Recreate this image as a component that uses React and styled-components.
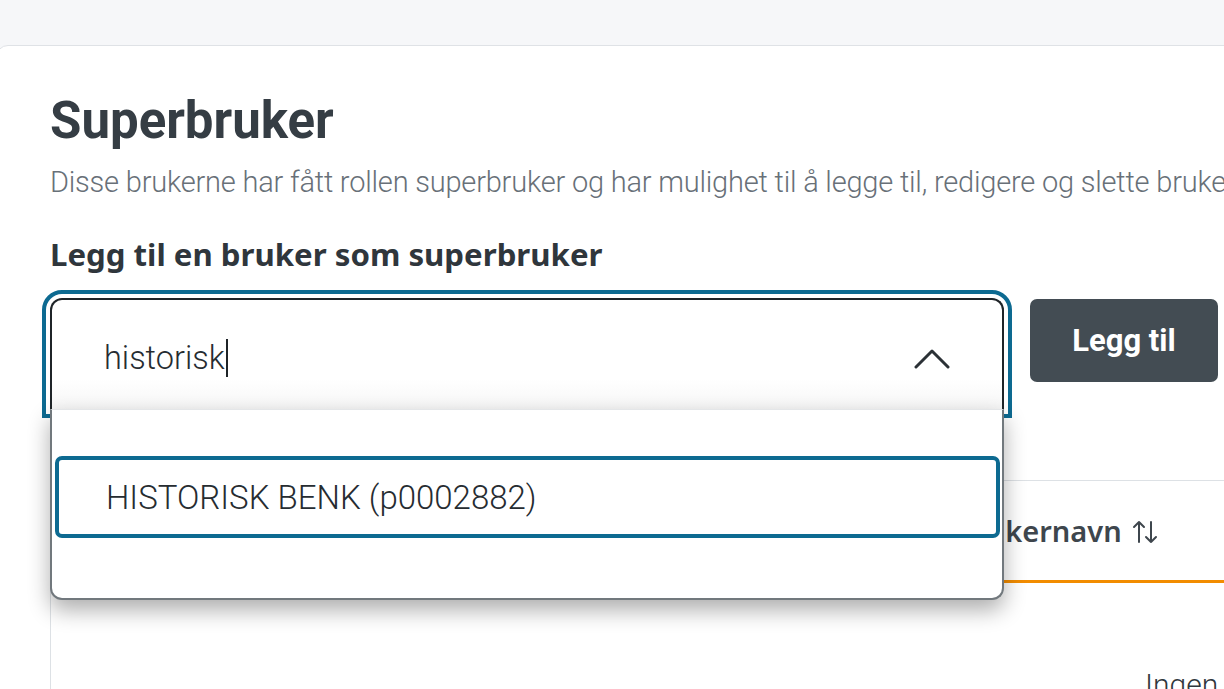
import React from "react";
import styled, { createGlobalStyle } from "styled-components";

const GlobalStyle = createGlobalStyle`
  html, body {
    margin: 0;
    padding: 0;
    background: #f6f7f9;
    font-family: Roboto, "Liberation Sans", sans-serif;
  }
  * { box-sizing: border-box; }
`;

const Page = styled.div`
  height: 689px;
  overflow: hidden;
  padding-top: 45px;
`;

const Card = styled.section`
  margin-left: -4px;
  width: 2600px;
  min-height: 800px;
  background: #fff;
  border: 1px solid #dfe2e6;
  border-radius: 12px;
  padding: 45px 0 0 53px;
`;

const Title = styled.h1`
  margin: 0;
  font-size: 51px;
  line-height: 60px;
  font-weight: 700;
  color: #353d44;
`;

const Lead = styled.p`
  margin: 12px 0 0;
  font-size: 29px;
  line-height: 38px;
  font-weight: 300;
  color: #687078;
  white-space: nowrap;
  letter-spacing: -0.2px;
`;

const Label = styled.label`
  display: block;
  margin-top: 33px;
  font-family: "Noto Sans", Roboto, sans-serif;
  font-size: 31.2px;
  line-height: 40px;
  font-weight: 700;
  color: #2f363c;
`;

const Row = styled.div`
  display: flex;
  align-items: flex-start;
  gap: 26px;
  margin-top: 24px;
`;

const Combo = styled.div`
  position: relative;
  width: 954px;
`;

const Field = styled.div`
  display: flex;
  align-items: center;
  justify-content: space-between;
  height: 112px;
  padding: 0 52px;
  border: 2px solid #1f2428;
  border-bottom: none;
  border-radius: 12px 12px 0 0;
  outline: 4px solid #0d6a91;
  outline-offset: 4px;
  background: linear-gradient(to bottom, #fff 72%, #f6f6f6);
  font-size: 32.5px;
  font-weight: 300;
  color: #262c31;
`;

const Value = styled.span`
  display: flex;
  align-items: center;
  margin-top: 5px;
`;

const Caret = styled.span`
  display: inline-block;
  width: 2px;
  height: 38px;
  margin-left: 1px;
  background: #1f2428;
`;

const Chevron = styled.svg`
  width: 36px;
  height: 22px;
  margin-top: 8px;
`;

const Menu = styled.div`
  position: absolute;
  left: 0;
  right: 0;
  top: 111px;
  height: 191px;
  padding: 46px 2px 0 3px;
  background: #fff;
  border: 2px solid #71787d;
  border-top: 1px solid #e4e6e8;
  border-radius: 0 0 12px 12px;
  box-shadow: 0 10px 22px rgba(0, 0, 0, 0.32);
  z-index: 2;
`;

const Option = styled.div`
  height: 82px;
  display: flex;
  align-items: center;
  padding-left: 47px;
  border: 4px solid ${(p) => (p.active ? "#0d6a91" : "transparent")};
  border-radius: 7px;
  font-size: 33px;
  font-weight: 300;
  color: #262c31;
`;

const Button = styled.button`
  width: 188px;
  height: 83px;
  margin-top: 1px;
  border: none;
  border-radius: 7px;
  background: #434c53;
  color: #fff;
  font-family: Roboto, "Liberation Sans", sans-serif;
  font-size: 31px;
  font-weight: 700;
`;

const Table = styled.div`
  margin-top: 70px;
  border: 1px solid #dde1e5;
  border-right: none;
  min-height: 300px;
`;

const Head = styled.div`
  display: grid;
  grid-template-columns: 880px 300px 1fr;
  height: 102px;
  border-bottom: 3px solid #f28c00;
`;

const HeadCell = styled.div`
  display: flex;
  align-items: center;
  gap: 10px;
  padding-left: 24px;
  font-family: "Noto Sans", Roboto, sans-serif;
  font-size: 29px;
  font-weight: 600;
  color: #3e464d;
`;

const SortIcon = styled.svg`
  width: 26px;
  height: 24px;
  margin-top: 2px;
`;

const Empty = styled.div`
  padding: 84px 0 0 1094px;
  font-size: 30px;
  font-weight: 300;
  color: #30373d;
  white-space: nowrap;
`;

export default function App() {
  return (
    <>
      <GlobalStyle />
      <Page>
        <Card>
          <Title>Superbruker</Title>
          <Lead>
            Disse brukerne har fått rollen superbruker og har mulighet til å legge til, redigere og slette brukere.
          </Lead>
          <Label>Legg til en bruker som superbruker</Label>
          <Row>
            <Combo>
              <Field>
                <Value>
                  historisk
                  <Caret />
                </Value>
                <Chevron viewBox="0 0 36 22" fill="none">
                  <path d="M2 19 L18 3 L34 19" stroke="#2b3136" strokeWidth="3" strokeLinecap="round" strokeLinejoin="round" />
                </Chevron>
              </Field>
              <Menu>
                <Option active>HISTORISK BENK (p0002882)</Option>
              </Menu>
            </Combo>
            <Button>Legg til</Button>
          </Row>
          <Table>
            <Head>
              <HeadCell>Navn</HeadCell>
              <HeadCell>
                Brukernavn
                <SortIcon viewBox="0 0 26 24" fill="none" stroke="#3e464d" strokeWidth="2" strokeLinecap="round" strokeLinejoin="round">
                  <path d="M7 22 V2 M2 7 L7 2 L12 7" />
                  <path d="M19 2 V22 M14 17 L19 22 L24 17" />
                </SortIcon>
              </HeadCell>
              <HeadCell />
            </Head>
            <Empty>Ingen superbrukere</Empty>
          </Table>
        </Card>
      </Page>
    </>
  );
}
